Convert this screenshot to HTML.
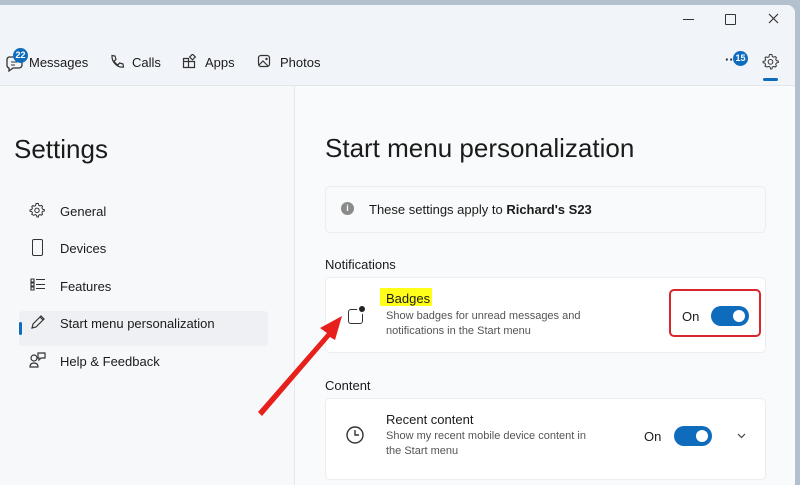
<!DOCTYPE html><html><head><style>
body{margin:0;width:800px;height:478px;overflow:hidden;background:#b3c1cf;font-family:"Liberation Sans",sans-serif;color:#1b1b1b;position:relative}
.win{position:absolute;left:0;top:5px;width:795px;height:480px;background:#f9fafb;border-top-right-radius:8px;overflow:hidden}
.top{position:absolute;left:0;top:0;width:795px;height:80px;background:#f1f4f8;border-bottom:1px solid #e3e6ea}
.t{position:absolute;font-size:13px;white-space:nowrap}
.left{position:absolute;left:0;top:81px;width:294px;height:400px;background:#f6f8fa;border-right:1px solid #e6e8eb}
.card{position:absolute;left:325px;width:439px;background:#fff;border:1px solid #ebedf0;border-radius:5px}
.sw{position:absolute;width:38px;height:20px;border-radius:10px;background:#0f6cbd}
.sw:after{content:"";position:absolute;right:4px;top:4px;width:12px;height:12px;border-radius:50%;background:#fff}
svg{position:absolute}
</style></head><body>
<div class="win">
<div class="top">
<svg style="left:5px;top:48px" width="20" height="20" viewBox="0 0 20 20"><path d="M4 4h10a3 3 0 0 1 3 3v5a3 3 0 0 1-3 3H8l-4 3v-3a3 3 0 0 1-2-3V7a3 3 0 0 1 2-3z" fill="none" stroke="#333" stroke-width="1.3"/><path d="M6 9h6M6 12h4" stroke="#333"/></svg>
<div style="position:absolute;left:13px;top:43px;width:15px;height:15px;border-radius:50%;background:#0f6cbd;color:#fff;font-size:9px;font-weight:bold;text-align:center;line-height:15px">22</div>
<div class="t" style="left:29px;top:50px">Messages</div>
<svg style="left:109px;top:49px" width="16" height="16" viewBox="0 0 16 16"><path d="M3 1.5l3 .5 1 3.5-2 1.5c1 2 2 3 4 4l1.5-2 3.5 1 .5 3c-6 1-12-5-11.5-11.5z" fill="none" stroke="#333" stroke-width="1.2"/></svg>
<div class="t" style="left:132px;top:50px">Calls</div>
<svg style="left:182px;top:49px" width="15" height="15" viewBox="0 0 15 15"><path d="M1.5 4.5h5v9h-5zM6.5 7.5h6v6h-6zM1.5 7.5h5" fill="none" stroke="#333" stroke-width="1.2"/><rect x="8.5" y="1" width="4" height="4" transform="rotate(45 10.5 3)" fill="none" stroke="#333" stroke-width="1.2"/></svg>
<div class="t" style="left:205px;top:50px">Apps</div>
<svg style="left:257px;top:49px" width="15" height="15" viewBox="0 0 15 15"><rect x="1.5" y="1.5" width="11" height="11" rx="2.5" fill="none" stroke="#333" stroke-width="1.2"/><path d="M2 11l4-4 5 5" fill="none" stroke="#333" stroke-width="1.2"/><circle cx="9.5" cy="5" r="1.2" fill="#333"/></svg>
<div class="t" style="left:280px;top:50px">Photos</div>
<div style="position:absolute;left:683px;top:14px;width:11px;height:1px;background:#333"></div>
<div style="position:absolute;left:725px;top:9px;width:9px;height:9px;border:1.3px solid #333;border-radius:1px"></div>
<svg style="left:768px;top:8px" width="11" height="11" viewBox="0 0 11 11"><path d="M1 1l9 9M10 1l-9 9" stroke="#333" stroke-width="1.2"/></svg>
<div class="t" style="left:725px;top:47px;font-weight:bold">··</div>
<div style="position:absolute;left:733px;top:46px;width:15px;height:15px;border-radius:50%;background:#0f6cbd;color:#fff;font-size:9px;font-weight:bold;text-align:center;line-height:15px">15</div>
<svg style="left:762px;top:48px" width="17" height="17" viewBox="0 0 24 24"><path d="M12 2l2 .3.6 2.6 1.8 1 2.5-.9 1.4 1.5-.9 2.5 1 1.8 2.6.6v2l-2.6.6-1 1.8.9 2.5-1.4 1.5-2.5-.9-1.8 1-.6 2.6h-2l-.6-2.6-1.8-1-2.5.9L4.2 18.7l.9-2.5-1-1.8L1.5 13.8v-2l2.6-.6 1-1.8-.9-2.5L5.6 5.4l2.5.9 1.8-1L10.5 2.3z" fill="none" stroke="#333" stroke-width="1.4"/><circle cx="12" cy="12.5" r="3.3" fill="none" stroke="#333" stroke-width="1.4"/></svg>
<div style="position:absolute;left:763px;top:73px;width:15px;height:3px;border-radius:2px;background:#0f6cbd"></div>
</div>
<div class="left"></div>
<div class="t" style="left:14px;top:129px;font-size:26px">Settings</div>
<svg style="left:29px;top:197px" width="16" height="16" viewBox="0 0 24 24"><path d="M12 2l2 .3.6 2.6 1.8 1 2.5-.9 1.4 1.5-.9 2.5 1 1.8 2.6.6v2l-2.6.6-1 1.8.9 2.5-1.4 1.5-2.5-.9-1.8 1-.6 2.6h-2l-.6-2.6-1.8-1-2.5.9L4.2 18.7l.9-2.5-1-1.8L1.5 13.8v-2l2.6-.6 1-1.8-.9-2.5L5.6 5.4l2.5.9 1.8-1L10.5 2.3z" fill="none" stroke="#333" stroke-width="1.5"/><circle cx="12" cy="12.5" r="3.3" fill="none" stroke="#333" stroke-width="1.5"/></svg>
<div class="t" style="left:60px;top:199px">General</div>
<div style="position:absolute;left:32px;top:234px;width:9px;height:15px;border:1.3px solid #333;border-radius:2px"></div>
<div class="t" style="left:60px;top:236px">Devices</div>
<svg style="left:30px;top:272px" width="16" height="15" viewBox="0 0 16 15"><path d="M1 2h3v3H1zM1 6h3v3H1zM1 10h3v3H1zM6 2.5h9M6 7.5h9M6 11.5h9" fill="none" stroke="#333" stroke-width="1.1"/></svg>
<div class="t" style="left:60px;top:274px">Features</div>
<div style="position:absolute;left:19px;top:306px;width:249px;height:35px;background:#eef0f3;border-radius:4px"></div>
<div style="position:absolute;left:19px;top:317px;width:3px;height:13px;background:#0f6cbd;border-radius:2px"></div>
<svg style="left:30px;top:309px" width="16" height="16" viewBox="0 0 16 16"><path d="M2 14l1-4 8-8 3 3-8 8z M10 3l3 3" fill="none" stroke="#333" stroke-width="1.2"/></svg>
<div class="t" style="left:60px;top:311px">Start menu personalization</div>
<svg style="left:29px;top:347px" width="17" height="17" viewBox="0 0 17 17"><circle cx="5" cy="6" r="3" fill="none" stroke="#333" stroke-width="1.2"/><path d="M1 15c0-3 2-4 4-4s4 1 4 4zM9 1h7v5h-4l-2 2V6H9z" fill="none" stroke="#333" stroke-width="1.2"/></svg>
<div class="t" style="left:60px;top:349px">Help &amp; Feedback</div>

<div class="t" style="left:325px;top:128px;font-size:26px">Start menu personalization</div>
<div class="card" style="top:181px;height:45px;background:#f9fafb"></div>
<div style="position:absolute;left:341px;top:197px;width:13px;height:13px;border-radius:50%;background:#8a8a8a;color:#fff;font-size:9px;text-align:center;line-height:13px;font-weight:bold">i</div>
<div class="t" style="left:369px;top:197px">These settings apply to <b>Richard's S23</b></div>
<div class="t" style="left:325px;top:252px">Notifications</div>
<div class="card" style="top:272px;height:74px"></div>
<div style="position:absolute;left:348px;top:304px;width:13px;height:13px;border:1.5px solid #333;border-radius:3px"></div>
<div style="position:absolute;left:359px;top:301px;width:6px;height:6px;border-radius:50%;background:#222;box-shadow:0 0 0 2px #fff"></div>
<div style="position:absolute;left:380px;top:283px;width:52px;height:18px;background:#ffff1a"></div>
<div class="t" style="left:386px;top:286px">Badges</div>
<div class="t" style="left:386px;top:304px;font-size:11px;color:#555;line-height:15px">Show badges for unread messages and<br>notifications in the Start menu</div>
<div style="position:absolute;left:669px;top:284px;width:92px;height:48px;border:2px solid #d8262a;border-radius:5px;box-sizing:border-box"></div>
<div class="t" style="left:682px;top:304px">On</div>
<div class="sw" style="left:711px;top:301px"></div>
<div class="t" style="left:325px;top:373px">Content</div>
<div class="card" style="top:393px;height:80px"></div>
<svg style="left:345px;top:420px" width="20" height="20" viewBox="0 0 20 20"><circle cx="10" cy="10" r="8" fill="none" stroke="#333" stroke-width="1.4"/><path d="M10 5v5h4" fill="none" stroke="#333" stroke-width="1.4"/></svg>
<div class="t" style="left:386px;top:407px">Recent content</div>
<div class="t" style="left:386px;top:424px;font-size:11px;color:#555;line-height:15px">Show my recent mobile device content in<br>the Start menu</div>
<div class="t" style="left:644px;top:424px">On</div>
<div class="sw" style="left:674px;top:421px"></div>
<svg style="left:737px;top:428px" width="9" height="6" viewBox="0 0 9 6"><path d="M1 1l3.5 3.5L8 1" fill="none" stroke="#444" stroke-width="1.2"/></svg>
</div>
<svg style="left:0;top:0" width="800" height="478"><path d="M258 412L327 333L320 328L342 316L335 340L330 337L262 416Z" fill="#e8201c"/></svg>
</body></html>
